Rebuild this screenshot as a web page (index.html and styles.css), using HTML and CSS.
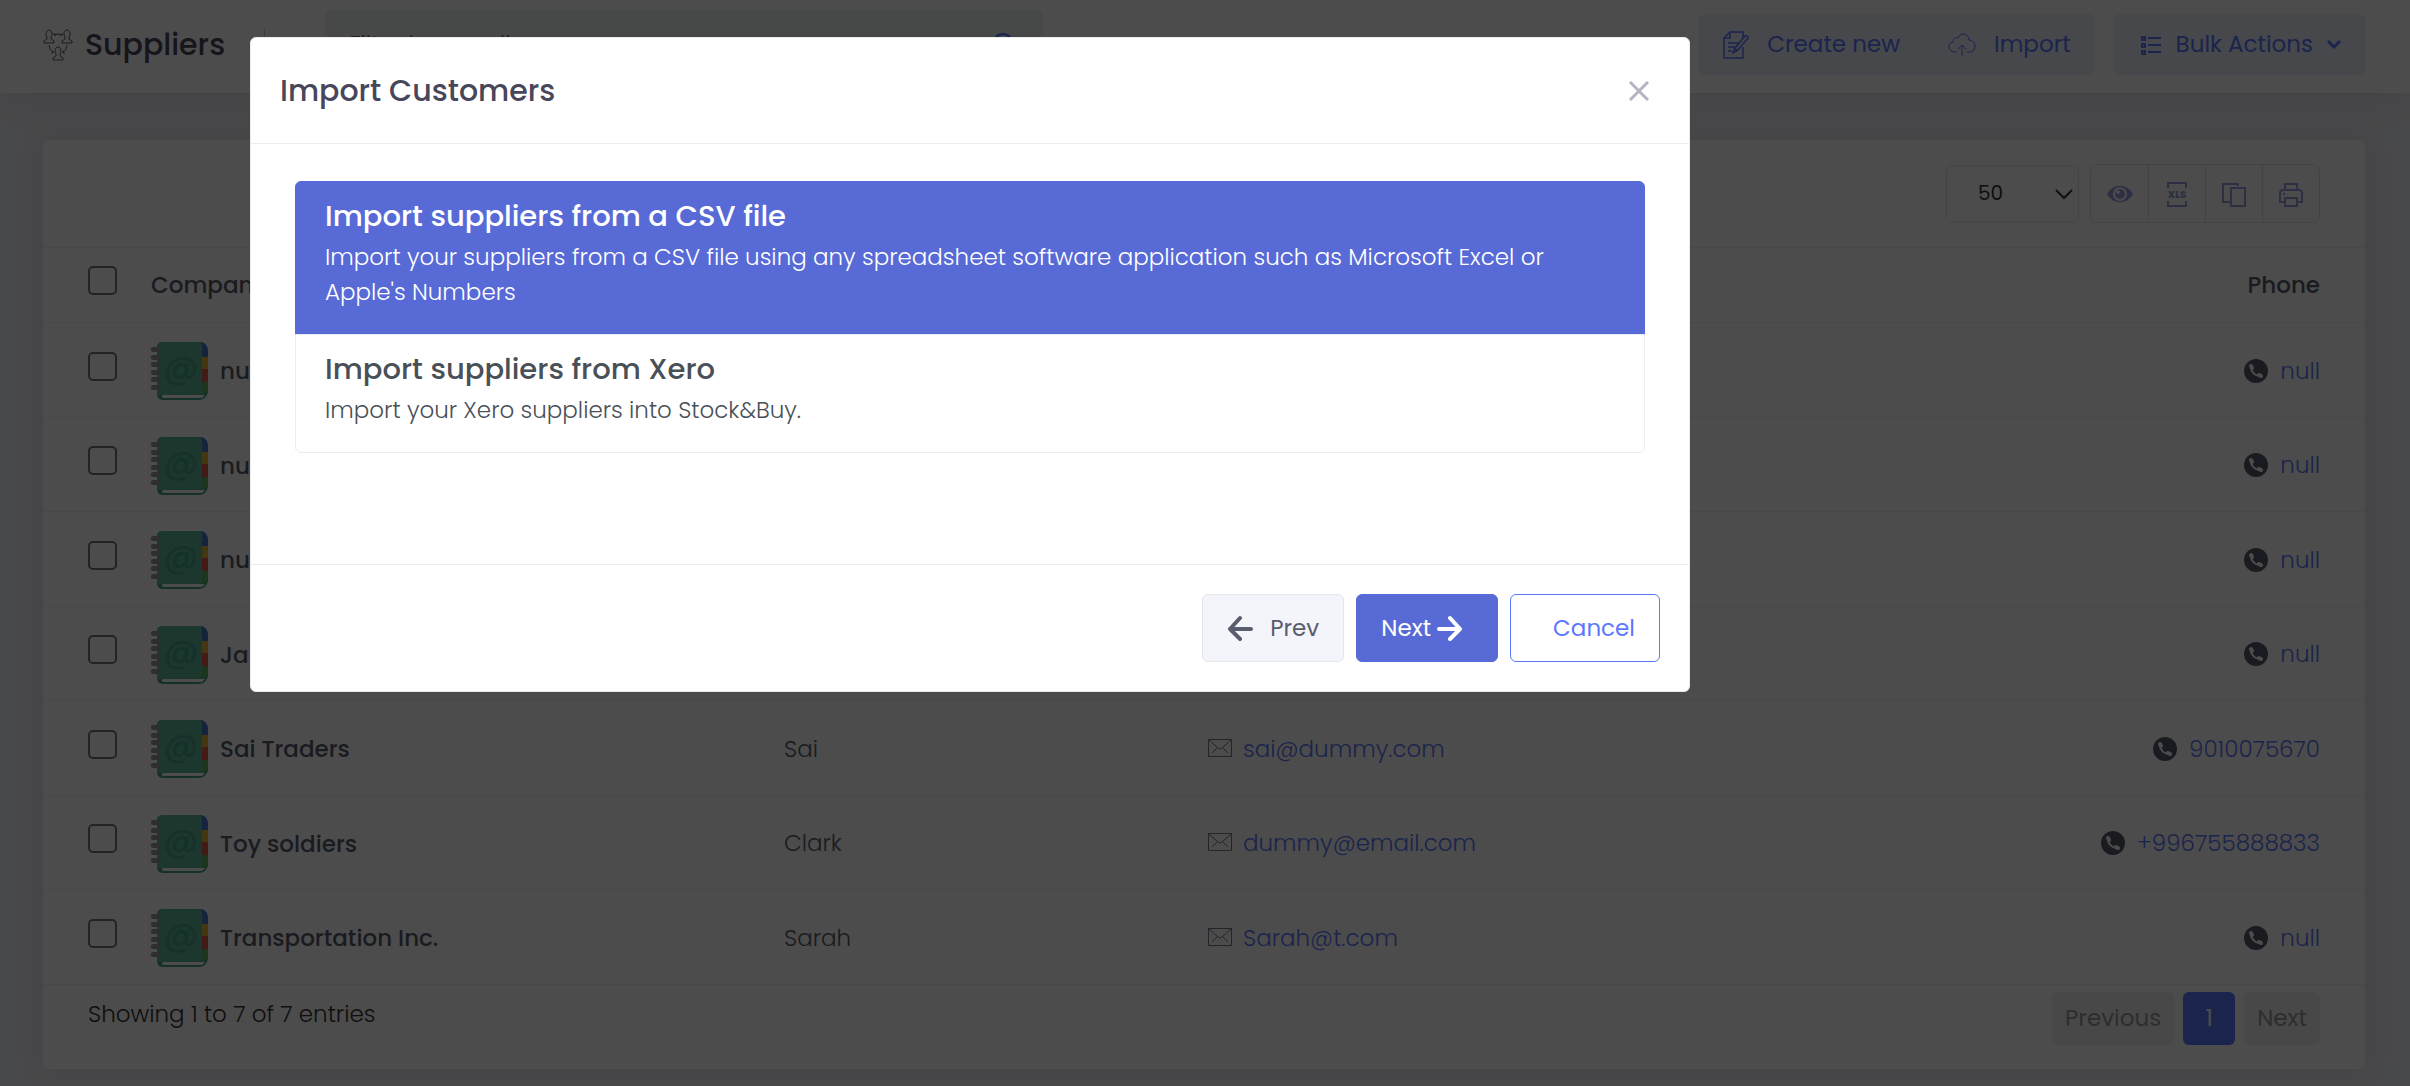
FILE: index.html
```html
<!DOCTYPE html>
<html lang="en">
<head>
    <meta charset="UTF-8">
    <meta name="viewport" content="width=device-width, initial-scale=1.0">
    <title>Suppliers</title>
    <link rel="stylesheet" href="styles.css">
</head>
<body>
    <!-- Shared icons -->
    <svg class="sprite" aria-hidden="true">
        <symbol id="icon-book" viewBox="0 0 57 58">
            <path d="M48 0h1c5 0 8 4 8 9v6H48z" fill="#4677c8"/>
            <path d="M48 15h9v13h-9z" fill="#e8b93c"/>
            <path d="M48 27h9v14h-9z" fill="#e0574a"/>
            <path d="M48 40h9v9c0 3-3 6-9 8z" fill="#5db560"/>
            <path d="M11 0h39v50c0 2-2 3-4 3h-34v1h40l5-6c0 6-4 10-9 10H12c-4 0-6-3-6-6V6c0-4 2-6 6-6z" fill="#47a086"/>
            <path d="M12 0h36c2 0 3 2 3 4v47c0 1-1 2-2 2H6V6c0-4 2-6 6-6z" fill="#5ab79c"/>
            <path d="M13 53h41l-3 3H13c-3 0-3-3 0-3z" fill="#fff"/>
            <text x="30" y="37" class="book-at">@</text>
            <g fill="#999"><rect y="5" width="9" height="5" rx="2"/><rect y="13" width="9" height="5" rx="2"/><rect y="20" width="9" height="5" rx="2"/><rect y="28" width="9" height="5" rx="2"/><rect y="35" width="9" height="5" rx="2"/><rect y="43" width="9" height="5" rx="2"/></g>
        </symbol>
        <symbol id="icon-phone" viewBox="0 0 24 24">
            <circle cx="12" cy="12" r="12" fill="#595d6e"/>
            <path d="M7 8c0 5 4 9 9 9" fill="none" stroke="#fff" stroke-width="2" stroke-linecap="round"/>
            <path d="M7 7l1 2M15 16l2 1" fill="none" stroke="#fff" stroke-width="4" stroke-linecap="round"/>
        </symbol>
        <symbol id="icon-mail" viewBox="0 0 24 18">
            <path d="M.5.500h23v17H.500zM.500.500L10 9q2 2 4 0L23.500.500M4 14l5-5M20 14l-5-5" fill="none" stroke="#74788d"/>
        </symbol>
    </svg>

    <header class="topbar">
        <svg class="title-icon" viewBox="0 0 30 32" fill="none" stroke="#595d6e">
            <path d="M1 14v-2l3-2V8C2 6 3 1 6 1s4 5 2 7v2l3 2v2z"/>
            <path d="M19 14v-2l3-2V8c-2-2-1-7 2-7s4 5 2 7v2l3 2v2z"/>
            <path d="M10 31v-2l3-2v-2c-2-2-1-7 2-7s4 5 2 7v2l3 2v2z"/>
            <path d="M11 6q4-2 8 0M11 4v2h2M19 4v2h-2M6 16q0 5 4 7M8 24h2v-2M24 16q0 5-4 7M22 24h-2v-2"/>
        </svg>
        <h1>Suppliers</h1>
        <span class="divider"></span>
        <form class="search">
            <input type="search" aria-label="Filter by suppliers" placeholder="Filter by suppliers">
            <svg class="search-icon" viewBox="0 0 24 24" fill="none" stroke="#5d78ff" stroke-width="2"><circle cx="11" cy="11" r="9"/><path d="M18 18l5 5"/></svg>
        </form>
        <div class="actions">
            <div class="action-group">
                <button class="action">
                    <svg class="icon-create" viewBox="0 0 26 28" fill="none" stroke="#5d78ff" stroke-width="1.500"><path d="M20 7V1H7L1 7v20h19V16M7 1v6H1M5 12h10M5 16h7M5 20h4M10 22l2-5L22 5q3-1 3 2L14 20zM12 17l2 3"/></svg>
                    Create new
                </button>
                <button class="action">
                    <svg class="icon-import" viewBox="0 0 28 24" fill="none" stroke="#5d78ff"><path d="M9 19H6C0 18-1 10 5 9 5 5 8 4 10 5 12-1 21 0 21 7c8 1 8 11 1 12h-3M14 23V12M10 16l4-4 4 4"/></svg>
                    Import
                </button>
            </div>
            <button class="action bulk">
                <svg class="icon-list" viewBox="0 0 20 20" fill="none" stroke="#5d78ff" stroke-width="2"><path d="M1 2h3v3H1zM1 9h3v3H1zM1 16h3v3H1zM7 3h13M7 10h13M7 17h13"/></svg>
                Bulk Actions
                <svg class="icon-caret" viewBox="0 0 14 9" fill="none" stroke="#5d78ff" stroke-width="3"><path d="M1 1l6 6 6-6"/></svg>
            </button>
        </div>
    </header>

    <main class="card">
        <div class="toolbar">
            <div class="page-size">
                <select aria-label="Entries per page">
                    <option>50</option>
                </select>
                <svg viewBox="0 0 18 12" fill="none" stroke="#333" stroke-width="2"><path d="M1 2l8 8 8-8"/></svg>
            </div>
            <div class="tools">
                <button aria-label="Columns"><svg viewBox="0 0 28 28"><path d="M1 14C7 3 21 3 27 14 21 25 7 25 1 14z" fill="#93a2dd"/><circle cx="14" cy="14" r="6" fill="none" stroke="#fff" stroke-width="2"/><circle cx="12" cy="12" r="2" fill="#fff"/></svg></button>
                <button aria-label="Export"><svg viewBox="0 0 28 28" fill="none" stroke="#93a2dd" stroke-width="2"><path d="M5 8V3h18v5M5 21v5h18v-5"/><text x="14" y="18" class="xls">XLS</text></svg></button>
                <button aria-label="Copy"><svg viewBox="0 0 28 28" fill="none" stroke="#93a2dd" stroke-width="2"><path d="M18 6V4H3v18h7M11 8h14v18H11z"/></svg></button>
                <button aria-label="Print"><svg viewBox="0 0 28 28" fill="none" stroke="#93a2dd" stroke-width="2"><path d="M8 10V4h12v6M8 22H3V12l2-2h18l2 2v10h-5M8 18h12v8H8zM6 14h2"/></svg></button>
            </div>
        </div>

        <table>
            <thead>
                <tr>
                    <th class="col-check"><input type="checkbox" aria-label="Select all"></th>
                    <th class="col-company">Company</th>
                    <th class="col-contact" aria-label="Contact"></th>
                    <th class="col-email" aria-label="Email"></th>
                    <th class="col-phone">Phone</th>
                </tr>
            </thead>
            <tbody>
                <tr>
                    <td><input type="checkbox" aria-label="Select row"></td>
                    <td class="company"><svg class="book"><use href="#icon-book"/></svg>null</td>
                    <td></td>
                    <td></td>
                    <td class="phone"><svg class="phone-icon"><use href="#icon-phone"/></svg><a href="#">null</a></td>
                </tr>
                <tr>
                    <td><input type="checkbox" aria-label="Select row"></td>
                    <td class="company"><svg class="book"><use href="#icon-book"/></svg>null</td>
                    <td></td>
                    <td></td>
                    <td class="phone"><svg class="phone-icon"><use href="#icon-phone"/></svg><a href="#">null</a></td>
                </tr>
                <tr>
                    <td><input type="checkbox" aria-label="Select row"></td>
                    <td class="company"><svg class="book"><use href="#icon-book"/></svg>null</td>
                    <td></td>
                    <td></td>
                    <td class="phone"><svg class="phone-icon"><use href="#icon-phone"/></svg><a href="#">null</a></td>
                </tr>
                <tr>
                    <td><input type="checkbox" aria-label="Select row"></td>
                    <td class="company"><svg class="book"><use href="#icon-book"/></svg>James</td>
                    <td></td>
                    <td></td>
                    <td class="phone"><svg class="phone-icon"><use href="#icon-phone"/></svg><a href="#">null</a></td>
                </tr>
                <tr>
                    <td><input type="checkbox" aria-label="Select row"></td>
                    <td class="company"><svg class="book"><use href="#icon-book"/></svg>Sai Traders</td>
                    <td>Sai</td>
                    <td><svg class="mail-icon"><use href="#icon-mail"/></svg><a href="#">sai@dummy.com</a></td>
                    <td class="phone"><svg class="phone-icon"><use href="#icon-phone"/></svg><a href="#">9010075670</a></td>
                </tr>
                <tr>
                    <td><input type="checkbox" aria-label="Select row"></td>
                    <td class="company"><svg class="book"><use href="#icon-book"/></svg>Toy soldiers</td>
                    <td>Clark</td>
                    <td><svg class="mail-icon"><use href="#icon-mail"/></svg><a href="#">dummy@email.com</a></td>
                    <td class="phone"><svg class="phone-icon"><use href="#icon-phone"/></svg><a href="#">+996755888833</a></td>
                </tr>
                <tr>
                    <td><input type="checkbox" aria-label="Select row"></td>
                    <td class="company"><svg class="book"><use href="#icon-book"/></svg>Transportation Inc.</td>
                    <td>Sarah</td>
                    <td><svg class="mail-icon"><use href="#icon-mail"/></svg><a href="#">Sarah@t.com</a></td>
                    <td class="phone"><svg class="phone-icon"><use href="#icon-phone"/></svg><a href="#">null</a></td>
                </tr>
            </tbody>
        </table>

        <div class="table-footer">
            <p>Showing 1 to 7 of 7 entries</p>
            <nav class="pages">
                <button disabled>Previous</button>
                <button class="current">1</button>
                <button disabled>Next</button>
            </nav>
        </div>
    </main>

    <div class="overlay">
        <div class="modal" role="dialog" aria-modal="true" aria-labelledby="modalTitle">
            <div class="modal-header">
                <h2 id="modalTitle">Import Customers</h2>
                <button class="close" aria-label="Close"><svg viewBox="0 0 20 20" fill="none" stroke="#b5b4c3" stroke-width="3"><path d="M1 1l18 18M19 1L1 19"/></svg></button>
            </div>
            <div class="modal-body">
                <button class="option active">
                    <span class="option-title">Import suppliers from a CSV file</span>
                    <span class="option-text">Import your suppliers from a CSV file using any spreadsheet software application such as Microsoft Excel or Apple's Numbers</span>
                </button>
                <button class="option">
                    <span class="option-title">Import suppliers from Xero</span>
                    <span class="option-text">Import your Xero suppliers into Stock&amp;Buy.</span>
                </button>
            </div>
            <div class="modal-footer">
                <button class="btn btn-prev"><svg viewBox="0 0 26 26" fill="none" stroke="#595d6e" stroke-width="4" stroke-linecap="round" stroke-linejoin="round"><path d="M13 3L3 14l10 10M3 14h21"/></svg>Prev</button>
                <button class="btn btn-next">Next<svg viewBox="0 0 26 26" fill="none" stroke="#fff" stroke-width="4" stroke-linecap="round" stroke-linejoin="round"><path d="M13 3l10 11-10 10M23 14H2"/></svg></button>
                <button class="btn btn-cancel">Cancel</button>
            </div>
        </div>
    </div>
</body>
</html>
```
FILE: styles.css
```css
* {
  box-sizing: border-box;
}

body {
  margin: 0;
  min-height: 100vh;
  padding-bottom: 17px;
  background-color: #f2f3f8;
  color: #595d6e;
  font-family: Poppins, Inter, sans-serif;
  font-size: 23px;
  font-weight: 300;
  line-height: 35px;
}

button,
input,
select {
  font: inherit;
  color: inherit;
}

button {
  border: none;
  background: none;
  padding: 0;
  cursor: pointer;
}

svg {
  flex-shrink: 0;
}

h1,
h2,
p {
  margin: 0;
}

a {
  color: #5d78ff;
  text-decoration: none;
}

.sprite {
  display: none;
}

/* Top bar */
.topbar {
  display: flex;
  align-items: center;
  height: 93px;
  padding: 0 45px 4px 43px;
  background-color: #fff;
  box-shadow: 0 10px 30px rgba(82, 63, 105, 0.08);
}

.title-icon {
  width: 30px;
  height: 32px;
  margin-right: 12px;
}

h1 {
  color: #48465b;
  font-size: 30px;
  font-weight: 500;
}

.divider {
  width: 1px;
  height: 34px;
  margin: 0 60px 0 39px;
  background-color: #c8cada;
}

.search {
  display: flex;
  align-items: center;
  width: 718px;
  height: 70px;
  padding: 0 26px 0 22px;
  border-radius: 6px;
  background-color: #eef5f1;
}

.search input {
  flex: 1;
  border: none;
  outline: none;
  background: none;
}

.search-icon {
  width: 26px;
  height: 26px;
}

.actions {
  display: flex;
  gap: 18px;
  margin-left: auto;
}

.action-group,
.bulk {
  border-radius: 6px;
  background-color: rgba(93, 120, 255, 0.1);
}

.action-group {
  display: flex;
}

.action {
  display: flex;
  align-items: center;
  height: 61px;
  padding: 0 24px;
  color: #5d78ff;
  font-weight: 400;
}

.icon-create {
  width: 26px;
  height: 28px;
  margin-right: 18px;
}

.icon-import {
  width: 28px;
  height: 24px;
  margin-right: 18px;
}

.icon-list {
  width: 20px;
  height: 20px;
  margin: 0 15px 0 4px;
}

.icon-caret {
  width: 14px;
  height: 9px;
  margin-left: 14px;
}

/* Suppliers table */
.card {
  margin: 47px 45px 0 43px;
  border-radius: 6px;
  background-color: #fff;
  box-shadow: 0 0 30px rgba(82, 63, 105, 0.1);
}

.toolbar {
  display: flex;
  align-items: center;
  justify-content: flex-end;
  gap: 11px;
  height: 107px;
  padding: 0 45px;
}

/* select and its arrow share one grid cell */
.page-size {
  display: grid;
  align-items: center;
}

.page-size select,
.page-size svg {
  grid-area: 1 / 1;
}

.page-size select {
  appearance: none;
  width: 133px;
  height: 57px;
  padding-left: 31px;
  border: 1px solid #e2e5ec;
  border-radius: 6px;
  background-color: #fff;
  color: #333;
  font-size: 20px;
  font-weight: 400;
}

.page-size svg {
  justify-self: end;
  width: 18px;
  height: 12px;
  margin-right: 6px;
  pointer-events: none;
}

.tools {
  display: flex;
  border: 1px solid #e2e5f2;
  border-radius: 6px;
}

.tools button {
  display: flex;
  align-items: center;
  justify-content: center;
  width: 57px;
  height: 57px;
}

.tools button + button {
  border-left: 1px solid #dcdff0;
}

.tools svg {
  width: 28px;
  height: 28px;
}

.xls {
  fill: #93a2dd;
  stroke: none;
  font-size: 10px;
  font-weight: 800;
  text-anchor: middle;
}

table {
  width: 100%;
  border-collapse: collapse;
  table-layout: fixed;
}

th,
td {
  height: 94px;
  padding: 0;
  border-top: 1px solid #ebedf2;
  text-align: left;
}

td {
  padding-top: 2px;
}

tbody tr:nth-child(odd) td {
  height: 95px;
}

tbody tr:last-child td {
  border-bottom: 1px solid #ebedf2;
}

th {
  height: 75px;
  font-weight: 500;
}

.col-check {
  width: 108px;
  padding-left: 45px;
}

.col-company {
  width: 633px;
}

.col-contact {
  width: 424px;
}

.col-phone,
.phone {
  padding-right: 45px;
  text-align: right;
}

td:first-child {
  padding-left: 45px;
}

td input,
th input {
  appearance: none;
  display: block;
  width: 29px;
  height: 29px;
  margin: 0 0 10px;
  border: 2px solid #767676;
  border-radius: 5px;
  background-color: #fff;
}

.company {
  font-weight: 500;
}

.book {
  width: 57px;
  height: 58px;
  margin-right: 12px;
  vertical-align: -21px;
}

.book-at {
  fill: #4ca68c;
  font-size: 34px;
  text-anchor: middle;
}

.mail-icon {
  width: 24px;
  height: 18px;
  margin-right: 11px;
}

.phone-icon {
  width: 24px;
  height: 24px;
  margin-right: 12px;
  vertical-align: -4px;
}

.table-footer {
  display: flex;
  justify-content: space-between;
  padding: 7px 45px 24px;
}

.table-footer p {
  padding-top: 5px;
  color: #333;
}

.pages {
  display: flex;
  gap: 9px;
}

.pages button {
  height: 53px;
  padding: 0 13px;
  border-radius: 6px;
  background-color: #f0f1f6;
  color: #999;
  font-weight: 400;
}

.pages .current {
  width: 52px;
  background-color: #5d78ff;
  color: #fff;
}

/* Import dialog */
.overlay {
  position: fixed;
  inset: 0;
  padding: 37px 24px 0 250px;
  background-color: rgba(0, 0, 0, 0.7);
}

.modal {
  max-width: 1440px;
  border: 1px solid #ebebeb;
  border-radius: 6px;
  background-color: #fff;
}

.modal-header {
  display: flex;
  align-items: center;
  justify-content: space-between;
  padding: 34px 40px 34px 29px;
  border-bottom: 1px solid #ebedf2;
}

h2 {
  color: #48465b;
  font-size: 30px;
  font-weight: 500;
  line-height: 37px;
}

.close {
  display: flex;
}

.close svg {
  width: 20px;
  height: 20px;
}

.modal-body {
  padding: 37px 44px 111px;
}

.option {
  display: block;
  width: 100%;
  padding: 17px 29px 24px;
  border: 1px solid #ebedf2;
  border-radius: 0 0 6px 6px;
  color: #495057;
  text-align: left;
}

.option + .option {
  margin-top: -1px;
}

.option.active {
  border-color: #586ad6;
  border-radius: 6px 6px 0 0;
  background-color: #586ad6;
  color: #fff;
}

.option-title,
.option-text {
  display: block;
}

.option-title {
  padding-bottom: 6px;
  font-size: 29px;
  font-weight: 500;
}

.modal-footer {
  display: flex;
  justify-content: flex-end;
  gap: 12px;
  padding: 29px;
  border-top: 1px solid #ebedf2;
}

.btn {
  display: flex;
  align-items: center;
  height: 68px;
  padding: 0 24px;
  border: 1px solid #e2e5ec;
  border-radius: 6px;
  font-weight: 400;
}

.btn svg {
  width: 26px;
  height: 26px;
}

.btn-prev {
  background-color: #f4f5fa;
}

.btn-prev svg {
  margin-right: 17px;
}

.btn-next {
  border-color: #586ad6;
  background-color: #586ad6;
  color: #fff;
}

.btn-next svg {
  margin: 0 10px 0 6px;
}

.btn-cancel {
  padding-left: 42px;
  border-color: #5d78ff;
  color: #5d78ff;
}
```
